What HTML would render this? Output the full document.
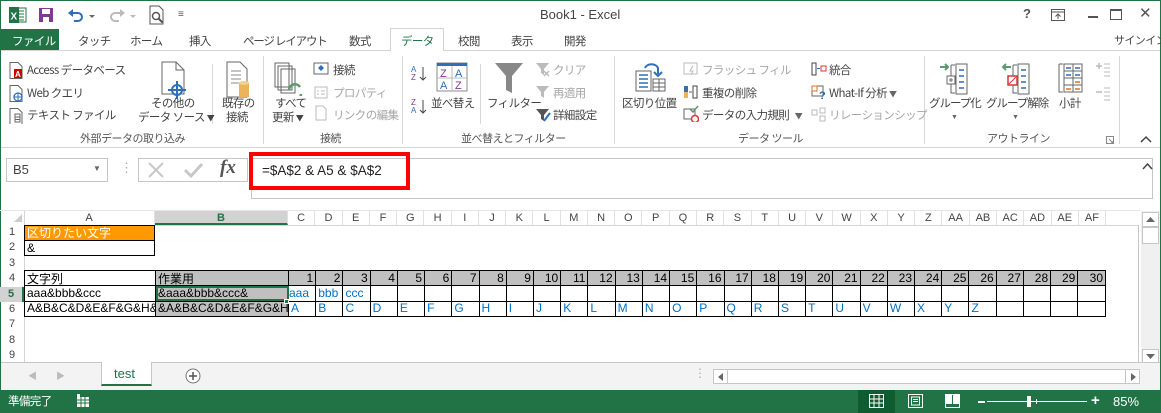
<!DOCTYPE html>
<html><head><meta charset="utf-8">
<style>
*{box-sizing:border-box;margin:0;padding:0}
body{width:1161px;height:413px;overflow:hidden;background:#fff;font-family:"Liberation Sans","Noto Sans CJK JP",sans-serif;font-size:12px;color:#444;position:relative}
.a{position:absolute;white-space:nowrap}
.t{font-family:"Noto Sans CJK JP","Liberation Sans",sans-serif;font-size:11.5px;letter-spacing:-0.6px;color:#444;line-height:14px}
.g{color:#a6a6a6}
.lbl{font-family:"Noto Sans CJK JP",sans-serif;font-size:11px;letter-spacing:-0.5px;color:#555;line-height:14px}
.sep{position:absolute;width:1px;background:#d8d8d8;top:56px;height:88px}
table{border-collapse:collapse;table-layout:fixed;position:absolute;left:24px;top:270px;width:1082px}
td{border:1px solid #000;height:15.4px;padding:0 2px;font-family:"Liberation Sans","Noto Sans CJK JP",sans-serif;font-size:12px;color:#000;white-space:nowrap;overflow:hidden;line-height:13px}
td.gr{background:#c0c0c0}
td.n{text-align:right}
td.b{color:#0070c0}
.ch{position:absolute;top:211px;height:14px;font-size:11px;color:#444;text-align:center;line-height:14px;border-right:1px solid #e0e0e0}
.rh{position:absolute;left:0;width:24px;height:15.4px;font-size:11px;color:#444;text-align:center;line-height:15px}
</style></head><body>
<div class="a" style="left:0;top:0;width:1161px;height:1px;background:#217346"></div>
<div class="a" style="left:0;top:0;width:1px;height:413px;background:#217346"></div>
<div class="a" style="right:0;top:0;width:1px;height:413px;background:#217346"></div>

<svg class="a" style="left:9px;top:7px" width="18" height="16"><rect x="5" y="1" width="12" height="14" fill="#fff" stroke="#217346"/><path d="M10 4h5M10 7h5M10 10h5M10 13h5" stroke="#217346"/><rect x="0" y="0" width="10" height="16" fill="#217346"/><text x="1.5" y="12.5" font-size="10" font-weight="bold" fill="#fff" font-family="Liberation Sans">X</text></svg>
<svg class="a" style="left:38px;top:7px" width="16" height="16"><rect x="1" y="1" width="14" height="14" fill="#7e3b8f"/><rect x="4" y="2" width="8" height="5" fill="#fff"/><rect x="5" y="10" width="6" height="5" fill="#fff"/></svg>
<svg class="a" style="left:67px;top:7px" width="30" height="16"><path d="M4 6h7a4 4 0 0 1 0 8H7" stroke="#2e6fb7" stroke-width="2" fill="none"/><path d="M1 6l5-4v8z" fill="#2e6fb7"/><path d="M22 8l3 3 3-3z" fill="#666"/></svg>
<svg class="a" style="left:108px;top:7px" width="30" height="16"><path d="M14 6H7a4 4 0 0 0 0 8h4" stroke="#bbb" stroke-width="2" fill="none"/><path d="M17 6l-5-4v8z" fill="#bbb"/><path d="M22 8l3 3 3-3z" fill="#bbb"/></svg>
<svg class="a" style="left:148px;top:5px" width="20" height="20"><path d="M2 1h9l4 4v14H2z" fill="#fff" stroke="#555"/><circle cx="8" cy="11" r="3.5" fill="none" stroke="#555" stroke-width="1.5"/><path d="M10.5 13.5l4 4" stroke="#555" stroke-width="2"/></svg>
<div class="a" style="left:178px;top:9px;font-size:10px;color:#555">&#8801;</div>
<div class="a" style="left:540px;top:7px;font-size:13px;color:#444">Book1 - Excel</div>
<div class="a" style="left:1023px;top:6px;font-size:13px;font-weight:bold;color:#555">?</div>
<svg class="a" style="left:1051px;top:9px" width="14" height="12"><rect x=".5" y=".5" width="13" height="11" fill="none" stroke="#555"/><path d="M.5 3h13M7 10V5M4.5 7.5L7 5l2.5 2.5" stroke="#555" fill="none"/></svg>
<div class="a" style="left:1088px;top:16px;width:10px;height:2px;background:#555"></div>
<div class="a" style="left:1110px;top:9px;width:12px;height:11px;border:1px solid #555;border-top-width:2px"></div>
<div class="a" style="left:1139px;top:4px;font-size:15px;color:#555">&#10005;</div>

<div class="a" style="left:1px;top:29px;width:58px;height:21px;background:#217346"></div>
<div class="a t" style="left:12px;top:34px;color:#fff">ファイル</div>
<div class="a t" style="left:78px;top:34px">タッチ</div>
<div class="a t" style="left:130px;top:34px">ホーム</div>
<div class="a t" style="left:189px;top:34px">挿入</div>
<div class="a t" style="left:243px;top:34px;letter-spacing:-1.2px">ページ レイアウト</div>
<div class="a t" style="left:349px;top:34px">数式</div>
<div class="a" style="left:390px;top:28px;width:54px;height:23px;border:1px solid #d5d5d5;border-bottom:none;background:#fff"></div>
<div class="a t" style="left:401px;top:34px;color:#217346">データ</div>
<div class="a t" style="left:458px;top:34px">校閲</div>
<div class="a t" style="left:511px;top:34px">表示</div>
<div class="a t" style="left:564px;top:34px">開発</div>
<div class="a t" style="left:1114px;top:33px;font-size:11px">サインイン</div>
<div class="a" style="left:1px;top:50px;width:389px;height:1px;background:#d5d5d5"></div>
<div class="a" style="left:444px;top:50px;width:716px;height:1px;background:#d5d5d5"></div>

<div class="sep" style="left:212px;height:60px;top:64px"></div>
<div class="sep" style="left:263px"></div>
<div class="sep" style="left:402px"></div>
<div class="sep" style="left:480px;height:60px;top:64px"></div>
<div class="sep" style="left:614px"></div>
<div class="sep" style="left:924px"></div>
<div class="sep" style="left:1119px"></div>

<svg class="a" style="left:9px;top:62px" width="16" height="62">
<path d="M1 .5h8l4 4v12H1z" fill="#fff" stroke="#666"/><rect x="5" y="7" width="8" height="9" fill="#c00"/><text x="6" y="15" font-size="8" fill="#fff" font-family="Liberation Sans" font-weight="bold">A</text>
<path d="M1 23.5h8l4 4v12H1z" fill="#fff" stroke="#666"/><circle cx="9" cy="35" r="4" fill="#fff" stroke="#2e6fb7" stroke-width="1.3"/><path d="M5 35h8M9 31v8" stroke="#2e6fb7"/>
<path d="M1 46.5h8l4 4v12H1z" fill="#fff" stroke="#666"/><path d="M6 52h5v8H6zM6 55h5M6 57.5h5" stroke="#666" fill="none"/>
</svg>
<div class="a t" style="left:27px;top:63px">Access データベース</div>
<div class="a t" style="left:27px;top:86px">Web クエリ</div>
<div class="a t" style="left:27px;top:108px">テキスト ファイル</div>

<svg class="a" style="left:160px;top:61px" width="28" height="42"><path d="M2 1h14l8 8v24H2z" fill="#fff" stroke="#666"/><path d="M16 1v8h8" fill="none" stroke="#666"/><circle cx="17" cy="29" r="5" fill="none" stroke="#2e6fb7" stroke-width="2"/><path d="M17 20v18M8 29h18" stroke="#2e6fb7" stroke-width="2"/></svg>
<div class="a t" style="left:151px;top:96px">その他の</div>
<div class="a t" style="left:138px;top:110px">データ ソース <span style="font-size:8px">▼</span></div>

<svg class="a" style="left:225px;top:61px" width="26" height="38"><path d="M2 1h13l7 7v28H2z" fill="#fff" stroke="#666"/><path d="M6 10h10M6 14h10M6 18h10M6 22h8" stroke="#888"/><path d="M14 22h10v14H14z" fill="#e9b45c"/><ellipse cx="19" cy="22" rx="5" ry="2" fill="#f5d08a"/></svg>
<div class="a t" style="left:222px;top:96px">既存の</div>
<div class="a t" style="left:226px;top:110px">接続</div>

<svg class="a" style="left:273px;top:62px" width="32" height="34"><path d="M2 1h14v24H2zM5 4h14v24H5zM8 7h14v24H8z" fill="#fff" stroke="#666"/><path d="M16 28a6 6 0 0 1 11-3M28 32a6 6 0 0 1-11 3" stroke="#5b9a6e" stroke-width="2.5" fill="none"/></svg>
<div class="a t" style="left:275px;top:96px">すべて</div>
<div class="a t" style="left:272px;top:110px">更新 <span style="font-size:8px">▼</span></div>

<svg class="a" style="left:313px;top:62px" width="16" height="60"><rect x="1" y="1" width="14" height="11" fill="#fff" stroke="#666"/><path d="M5 6l3-3 3 3-3 3z" fill="#2e6fb7"/><rect x="2" y="25" width="12" height="11" fill="#fff" stroke="#bbb"/><path d="M4 29h2M8 29h4M4 32h2M8 32h4" stroke="#bbb"/><path d="M3 44h7l3 3v11H3z" fill="#fff" stroke="#bbb"/></svg>
<div class="a t" style="left:333px;top:63px">接続</div>
<div class="a t g" style="left:333px;top:86px">プロパティ</div>
<div class="a t g" style="left:333px;top:108px">リンクの編集</div>
<div class="a lbl" style="left:80px;top:131px">外部データの取り込み</div>
<div class="a lbl" style="left:320px;top:131px">接続</div>

<svg class="a" style="left:410px;top:65px" width="20" height="50"><text x="1" y="7" font-size="8" fill="#2e6fb7" font-family="Liberation Sans">A</text><text x="1" y="15" font-size="8" fill="#7e3b8f" font-family="Liberation Sans">Z</text><path d="M13 2v13M10 12l3 3 3-3" stroke="#444" fill="none"/>
<text x="1" y="40" font-size="8" fill="#7e3b8f" font-family="Liberation Sans">Z</text><text x="1" y="48" font-size="8" fill="#2e6fb7" font-family="Liberation Sans">A</text><path d="M13 35v13M10 45l3 3 3-3" stroke="#444" fill="none"/></svg>
<svg class="a" style="left:436px;top:62px" width="32" height="30"><rect x="1" y="1" width="30" height="28" fill="#fff" stroke="#888"/><rect x="1" y="1" width="30" height="3" fill="#2e6fb7"/><path d="M16 4v25M1 16h30" stroke="#bbb"/><text x="4" y="15" font-size="11" fill="#7e3b8f" font-family="Liberation Sans">Z</text><text x="19" y="15" font-size="11" fill="#2e6fb7" font-family="Liberation Sans">A</text><text x="4" y="27" font-size="11" fill="#2e6fb7" font-family="Liberation Sans">A</text><text x="19" y="27" font-size="11" fill="#7e3b8f" font-family="Liberation Sans">Z</text></svg>
<div class="a t" style="left:431px;top:96px">並べ替え</div>
<svg class="a" style="left:494px;top:62px" width="30" height="32"><path d="M1 1h28L18 14v17l-6-3V14z" fill="#888"/></svg>
<div class="a t" style="left:487px;top:96px">フィルター</div>
<svg class="a" style="left:535px;top:62px" width="16" height="60"><path d="M1 1h13l-5 6v6l-3-2V7z" fill="#bbb"/><path d="M9 9l5 5M14 9l-5 5" stroke="#bbb" stroke-width="1.5"/><path d="M1 24h13l-5 6v6l-3-2v-4z" fill="#bbb"/><path d="M1 47h13l-5 6v6l-3-2v-4z" fill="#555"/><path d="M9 59l6-8" stroke="#2e6fb7" stroke-width="2"/></svg>
<div class="a t g" style="left:553px;top:63px">クリア</div>
<div class="a t g" style="left:553px;top:86px">再適用</div>
<div class="a t" style="left:553px;top:108px">詳細設定</div>
<div class="a lbl" style="left:461px;top:131px">並べ替えとフィルター</div>

<svg class="a" style="left:631px;top:61px" width="36" height="32"><path d="M5 10h15v20H5z" fill="#fff" stroke="#666"/><path d="M8 14h9M8 18h9M8 22h9M8 26h9" stroke="#2e6fb7" stroke-width="1.5"/><rect x="22" y="18" width="12" height="12" fill="#fff" stroke="#666"/><path d="M22 22h12M22 26h12M28 18v12" stroke="#666"/><path d="M14 7a7 6 0 0 1 13 0v6" stroke="#2e6fb7" stroke-width="2" fill="none"/><path d="M23 11l4 4 4-4" stroke="#2e6fb7" stroke-width="2" fill="none"/></svg>
<div class="a t" style="left:622px;top:96px">区切り位置</div>
<svg class="a" style="left:683px;top:62px" width="16" height="60"><rect x="1" y="1" width="13" height="11" fill="none" stroke="#bbb"/><path d="M10 4l-3 5h3l-2 4" stroke="#bbb" fill="none"/><rect x="1" y="24" width="4" height="12" fill="#3a6ea5"/><rect x="1" y="30" width="4" height="6" fill="#e9b45c"/><rect x="10" y="24" width="4" height="12" fill="#fff" stroke="#444"/><path d="M6 30h3" stroke="#2e6fb7"/><rect x="1" y="47" width="11" height="10" fill="none" stroke="#666"/><circle cx="12" cy="57" r="3.5" fill="#fff" stroke="#d33" stroke-width="1.5"/><path d="M7 47l3 3 5-6" stroke="#5b9a6e" fill="none" stroke-width="1.5"/></svg>
<div class="a t g" style="left:702px;top:63px">フラッシュ フィル</div>
<div class="a t" style="left:702px;top:86px">重複の削除</div>
<div class="a t" style="left:702px;top:108px">データの入力規則 <span style="font-size:8px;color:#666">&nbsp;&nbsp;&nbsp;▼</span></div>
<svg class="a" style="left:811px;top:62px" width="16" height="60"><rect x="1" y="1" width="4" height="12" fill="#fff" stroke="#444"/><rect x="10" y="4" width="5" height="5" fill="#fff" stroke="#d33"/><path d="M6 6.5h3" stroke="#2e6fb7"/><rect x="1" y="24" width="11" height="10" fill="#fff" stroke="#666"/><rect x="1" y="24" width="5" height="5" fill="#fff" stroke="#e07020"/><text x="8" y="37" font-size="11" fill="#2e6fb7" font-family="Liberation Sans" font-weight="bold">?</text><rect x="1" y="48" width="5" height="5" fill="none" stroke="#bbb"/><rect x="9" y="46" width="5" height="5" fill="none" stroke="#bbb"/><rect x="9" y="54" width="5" height="5" fill="none" stroke="#bbb"/></svg>
<div class="a t" style="left:829px;top:63px">統合</div>
<div class="a t" style="left:829px;top:86px">What-If 分析 <span style="font-size:8px;color:#666">▼</span></div>
<div class="a t g" style="left:829px;top:108px">リレーションシップ</div>
<div class="a lbl" style="left:738px;top:131px">データ ツール</div>

<svg class="a" style="left:939px;top:62px" width="30" height="34"><path d="M1 5h8M6 2l3 3-3 3" stroke="#5b9a6e" stroke-width="2" fill="none"/><path d="M12 3h4M12 3v28h4" stroke="#666" fill="none"/><rect x="17" y="2" width="11" height="30" fill="#fff" stroke="#666"/><path d="M20 8h5M20 14h5M20 20h5M20 26h5" stroke="#2e6fb7" stroke-width="1.5"/><rect x="8" y="14" width="8" height="8" fill="#fff" stroke="#666"/><path d="M10 18h4M12 16v4" stroke="#666"/></svg>
<div class="a t" style="left:929px;top:96px;letter-spacing:-1px">グループ化</div>
<div class="a" style="left:951px;top:114px;font-size:7px;color:#666">▼</div>
<svg class="a" style="left:1001px;top:62px" width="30" height="34"><path d="M10 5H2M5 2L2 5l3 3" stroke="#5b9a6e" stroke-width="2" fill="none"/><path d="M12 3h4M12 3v28h4" stroke="#666" fill="none"/><rect x="17" y="2" width="11" height="30" fill="#fff" stroke="#666"/><path d="M20 8h5M20 14h5M20 20h5M20 26h5" stroke="#2e6fb7" stroke-width="1.5"/><rect x="7" y="14" width="9" height="9" fill="#fff" stroke="#d33" stroke-width="1.5"/><path d="M8 22l7-7" stroke="#d33"/></svg>
<div class="a t" style="left:986px;top:96px;letter-spacing:-1px">グループ解除</div>
<div class="a" style="left:1012px;top:114px;font-size:7px;color:#666">▼</div>
<svg class="a" style="left:1055px;top:62px" width="30" height="34"><path d="M4 2h4M4 2v28h4" stroke="#666" fill="none"/><rect x="9" y="2" width="18" height="28" fill="#fff" stroke="#666"/><path d="M9 9h18M9 16h18M9 23h18M18 2v28" stroke="#666"/><path d="M11 6h5M20 6h5M11 13h5M20 13h5" stroke="#2e6fb7" stroke-width="1.5"/><path d="M20 20h5M20 27h5M11 27h5" stroke="#e07020" stroke-width="1.5"/></svg>
<div class="a t" style="left:1059px;top:96px">小計</div>
<svg class="a" style="left:1095px;top:62px" width="16" height="44"><path d="M1 4h6M4 1v6" stroke="#bbb" stroke-width="1.5"/><path d="M9 2h6M9 6h6M9 10h6M9 14h6" stroke="#bbb"/><path d="M1 30h6" stroke="#bbb" stroke-width="1.5"/><path d="M9 26h6M9 30h6M9 34h6M9 38h6" stroke="#bbb"/></svg>
<div class="a lbl" style="left:987px;top:131px">アウトライン</div>
<svg class="a" style="left:1106px;top:136px" width="8" height="8"><rect x=".5" y=".5" width="7" height="7" fill="none" stroke="#888"/><path d="M3 3l4 4M5 7h2V5" stroke="#888" fill="none"/></svg>
<svg class="a" style="left:1140px;top:135px" width="12" height="8"><path d="M1 7l5-5 5 5" stroke="#444" stroke-width="1.5" fill="none"/></svg>
<div class="a" style="left:1px;top:147px;width:1159px;height:1px;background:#d5d5d5"></div>

<div class="a" style="left:6px;top:158px;width:102px;height:24px;border:1px solid #c6c6c6"></div>
<div class="a" style="left:13px;top:162px;font-size:13px;color:#444">B5</div>
<div class="a" style="left:93px;top:164px;font-size:8px;color:#666">▼</div>
<div class="a" style="left:120px;top:160px;font-size:13px;color:#aaa">⋮</div>
<div class="a" style="left:138px;top:158px;width:110px;height:24px;border:1px solid #c6c6c6"></div>
<svg class="a" style="left:146px;top:161px" width="20" height="18"><path d="M3 2l14 14M17 2L3 16" stroke="#c8c8c8" stroke-width="2"/></svg>
<svg class="a" style="left:183px;top:161px" width="20" height="18"><path d="M2 9l6 6L19 3" stroke="#c8c8c8" stroke-width="3" fill="none"/></svg>
<div class="a" style="left:220px;top:157px;font-family:'Liberation Serif',serif;font-style:italic;font-size:19px;color:#555;font-weight:bold">fx</div>
<div class="a" style="left:251px;top:158px;width:902px;height:41px;border:1px solid #c6c6c6"></div>
<div class="a" style="left:249px;top:152px;width:161px;height:38px;border:4px solid #ff0000"></div>
<div class="a" style="left:262px;top:163px;font-size:13.5px;color:#222;white-space:pre">=$A$2 &amp; A5 &amp; $A$2</div>
<svg class="a" style="left:1142px;top:162px" width="11" height="8"><path d="M1 7l4.5-5 4.5 5" stroke="#444" stroke-width="1.5" fill="none"/></svg>

<div class="a" style="left:0;top:210px;width:1140px;height:1px;background:#e6e6e6"></div>
<svg class="a" style="left:14px;top:214px" width="9" height="9"><path d="M8 0v8H0z" fill="#ccc"/></svg>
<div class="ch" style="left:24px;width:131px">A</div>
<div class="ch" style="left:155px;width:133px;background:#d2d2d2;color:#217346;border-bottom:2px solid #217346;font-weight:bold">B</div>
<div class="a" style="left:24px;top:225px;width:1115px;height:1px;background:#d5d5d5"></div>
<div class="a" style="left:24px;top:211px;width:1px;height:151px;background:#d5d5d5"></div>

<div class="rh" style="top:225px">1</div>
<div class="rh" style="top:240.4px">2</div>
<div class="rh" style="top:255.8px">3</div>
<div class="rh" style="top:271.2px">4</div>
<div class="rh" style="top:286.6px;background:#d2d2d2;color:#217346;font-weight:bold;border-right:2px solid #217346">5</div>
<div class="rh" style="top:302px">6</div>
<div class="rh" style="top:317.4px">7</div>
<div class="rh" style="top:332.8px">8</div>
<div class="rh" style="top:348.2px">9</div>

<div class="a" style="left:24px;top:225px;width:131px;height:31px;border:1px solid #000"></div>
<div class="a" style="left:25px;top:226px;width:129px;height:14px;background:#ff9900;color:#fff;font-family:'Noto Sans CJK JP',sans-serif;font-size:12px;line-height:14px;padding-left:2px">区切りたい文字</div>
<div class="a" style="left:24px;top:240px;width:131px;height:1px;background:#000"></div>
<div class="a" style="left:27px;top:241px;color:#000;font-size:12px;line-height:14px">&amp;</div>

<table>
<colgroup><col style="width:131px"><col style="width:133px"></colgroup>
<tr><td style="font-family:'Noto Sans CJK JP',sans-serif">文字列</td><td class="gr" style="font-family:'Noto Sans CJK JP',sans-serif">作業用</td>
<td class="gr n">1</td><td class="gr n">2</td><td class="gr n">3</td><td class="gr n">4</td><td class="gr n">5</td><td class="gr n">6</td><td class="gr n">7</td><td class="gr n">8</td><td class="gr n">9</td><td class="gr n">10</td><td class="gr n">11</td><td class="gr n">12</td><td class="gr n">13</td><td class="gr n">14</td><td class="gr n">15</td><td class="gr n">16</td><td class="gr n">17</td><td class="gr n">18</td><td class="gr n">19</td><td class="gr n">20</td><td class="gr n">21</td><td class="gr n">22</td><td class="gr n">23</td><td class="gr n">24</td><td class="gr n">25</td><td class="gr n">26</td><td class="gr n">27</td><td class="gr n">28</td><td class="gr n">29</td><td class="gr n">30</td></tr>
<tr><td>aaa&amp;bbb&amp;ccc</td><td class="gr" style="outline:2px solid #217346;outline-offset:-2px">&amp;aaa&amp;bbb&amp;ccc&amp;</td><td class="b" style="padding:0">aaa</td><td class="b">bbb</td><td class="b">ccc</td><td></td><td></td><td></td><td></td><td></td><td></td><td></td><td></td><td></td><td></td><td></td><td></td><td></td><td></td><td></td><td></td><td></td><td></td><td></td><td></td><td></td><td></td><td></td><td></td><td></td><td></td><td></td></tr>
<tr><td>A&amp;B&amp;C&amp;D&amp;E&amp;F&amp;G&amp;H&amp;I&amp;J</td><td class="gr">&amp;A&amp;B&amp;C&amp;D&amp;E&amp;F&amp;G&amp;H&amp;I&amp;J</td><td class="b">A</td><td class="b">B</td><td class="b">C</td><td class="b">D</td><td class="b">E</td><td class="b">F</td><td class="b">G</td><td class="b">H</td><td class="b">I</td><td class="b">J</td><td class="b">K</td><td class="b">L</td><td class="b">M</td><td class="b">N</td><td class="b">O</td><td class="b">P</td><td class="b">Q</td><td class="b">R</td><td class="b">S</td><td class="b">T</td><td class="b">U</td><td class="b">V</td><td class="b">W</td><td class="b">X</td><td class="b">Y</td><td class="b">Z</td><td></td><td></td><td></td><td></td></tr>
</table>
<div class="a" style="left:284px;top:299px;width:5px;height:5px;background:#217346;border:1px solid #fff"></div>

<div class="ch" style="left:288px;width:27.3px">C</div><div class="ch" style="left:315.3px;width:27.3px">D</div><div class="ch" style="left:342.5px;width:27.3px">E</div><div class="ch" style="left:369.8px;width:27.3px">F</div><div class="ch" style="left:397.1px;width:27.3px">G</div><div class="ch" style="left:424.4px;width:27.3px">H</div><div class="ch" style="left:451.6px;width:27.3px">I</div><div class="ch" style="left:478.9px;width:27.3px">J</div><div class="ch" style="left:506.2px;width:27.3px">K</div><div class="ch" style="left:533.4px;width:27.3px">L</div><div class="ch" style="left:560.7px;width:27.3px">M</div><div class="ch" style="left:588px;width:27.3px">N</div><div class="ch" style="left:615.2px;width:27.3px">O</div><div class="ch" style="left:642.5px;width:27.3px">P</div><div class="ch" style="left:669.8px;width:27.3px">Q</div><div class="ch" style="left:697.1px;width:27.3px">R</div><div class="ch" style="left:724.3px;width:27.3px">S</div><div class="ch" style="left:751.6px;width:27.3px">T</div><div class="ch" style="left:778.9px;width:27.3px">U</div><div class="ch" style="left:806.1px;width:27.3px">V</div><div class="ch" style="left:833.4px;width:27.3px">W</div><div class="ch" style="left:860.7px;width:27.3px">X</div><div class="ch" style="left:887.9px;width:27.3px">Y</div><div class="ch" style="left:915.2px;width:27.3px">Z</div><div class="ch" style="left:942.5px;width:27.3px">AA</div><div class="ch" style="left:969.8px;width:27.3px">AB</div><div class="ch" style="left:997px;width:27.3px">AC</div><div class="ch" style="left:1024.3px;width:27.3px">AD</div><div class="ch" style="left:1051.6px;width:27.3px">AE</div><div class="ch" style="left:1078.8px;width:27.3px">AF</div>

<div class="a" style="left:1138px;top:225px;width:1px;height:138px;background:#c6c6c6"></div>
<div class="a" style="left:1141px;top:211px;width:19px;height:152px;background:#f0f0f0"></div>
<div class="a" style="left:1142px;top:212px;width:17px;height:15px;border:1px solid #c6c6c6;background:#fff"></div>
<svg class="a" style="left:1146px;top:217px" width="9" height="5"><path d="M0 5l4.5-5L9 5z" fill="#666"/></svg>
<div class="a" style="left:1142px;top:227px;width:17px;height:17px;border:1px solid #c6c6c6;background:#fff"></div>
<div class="a" style="left:1142px;top:349px;width:17px;height:14px;border:1px solid #c6c6c6;background:#fff"></div>
<svg class="a" style="left:1146px;top:354px" width="9" height="5"><path d="M0 0l4.5 5L9 0z" fill="#666"/></svg>

<div class="a" style="left:1px;top:362px;width:1159px;height:28px;background:#f3f3f3;border-top:1px solid #c6c6c6"></div>
<div class="a" style="left:28px;top:369px;font-size:9px;color:#bbb">◀</div>
<div class="a" style="left:56px;top:369px;font-size:9px;color:#bbb">▶</div>
<div class="a" style="left:101px;top:362px;width:51px;height:24px;background:#fff;border:1px solid #c6c6c6;border-top:none;border-bottom:2px solid #217346"></div>
<div class="a" style="left:114px;top:366px;font-size:13px;color:#217346">test</div>
<svg class="a" style="left:185px;top:368px" width="16" height="16"><circle cx="8" cy="8" r="7" fill="#fff" stroke="#777"/><path d="M8 4v8M4 8h8" stroke="#555" stroke-width="1.5"/></svg>
<div class="a" style="left:694px;top:366px;font-size:12px;color:#aaa">⋮</div>
<div class="a" style="left:713px;top:369px;width:427px;height:15px;background:#fff;border:1px solid #c6c6c6"></div>
<div class="a" style="left:713px;top:369px;width:15px;height:15px;border:1px solid #c6c6c6;background:#fff"></div>
<svg class="a" style="left:718px;top:373px" width="5" height="8"><path d="M5 0L0 4l5 4z" fill="#666"/></svg>
<div class="a" style="left:1125px;top:369px;width:15px;height:15px;border:1px solid #c6c6c6;background:#fff"></div>
<svg class="a" style="left:1131px;top:373px" width="5" height="8"><path d="M0 0l5 4-5 4z" fill="#666"/></svg>

<div class="a" style="left:0;top:390px;width:1161px;height:23px;background:#217346"></div>
<div class="a t" style="left:8px;top:394px;color:#fff">準備完了</div>
<svg class="a" style="left:76px;top:394px" width="14" height="14"><rect x="1" y="3" width="12" height="10" fill="#fff"/><path d="M1 6h12M1 9h12M5 3v10M9 3v10" stroke="#217346"/><rect x="1" y="0" width="3" height="3" fill="#fff"/></svg>
<div class="a" style="left:858px;top:390px;width:37px;height:23px;background:#0e5c2f"></div>
<svg class="a" style="left:869px;top:394px" width="15" height="14"><rect x=".5" y=".5" width="14" height="13" fill="none" stroke="#fff"/><path d="M5 .5v13M10 .5v13M.5 5h14M.5 9h14" stroke="#fff"/></svg>
<svg class="a" style="left:908px;top:394px" width="15" height="14"><rect x=".5" y=".5" width="14" height="13" fill="none" stroke="#fff"/><rect x="3.5" y="3" width="8" height="8" fill="none" stroke="#fff"/><path d="M5 5.5h5M5 7.5h5" stroke="#fff"/></svg>
<svg class="a" style="left:945px;top:394px" width="15" height="14"><rect x=".5" y=".5" width="14" height="13" fill="none" stroke="#fff"/><rect x="1" y="1" width="6" height="9" fill="#fff"/><rect x="8" y="1" width="6" height="9" fill="#fff"/></svg>
<div class="a" style="left:978px;top:401px;width:7px;height:2px;background:#fff"></div>
<div class="a" style="left:987px;top:401px;width:100px;height:1px;background:#fff"></div>
<div class="a" style="left:1027px;top:396px;width:4px;height:11px;background:#fff"></div>
<div class="a" style="left:1036px;top:399px;width:1px;height:5px;background:#fff"></div>
<div class="a" style="left:1091px;top:393px;color:#fff;font-size:15px;font-weight:bold;line-height:16px">+</div>
<div class="a" style="left:1113px;top:394px;color:#fff;font-size:13px">85%</div>
</body></html>
